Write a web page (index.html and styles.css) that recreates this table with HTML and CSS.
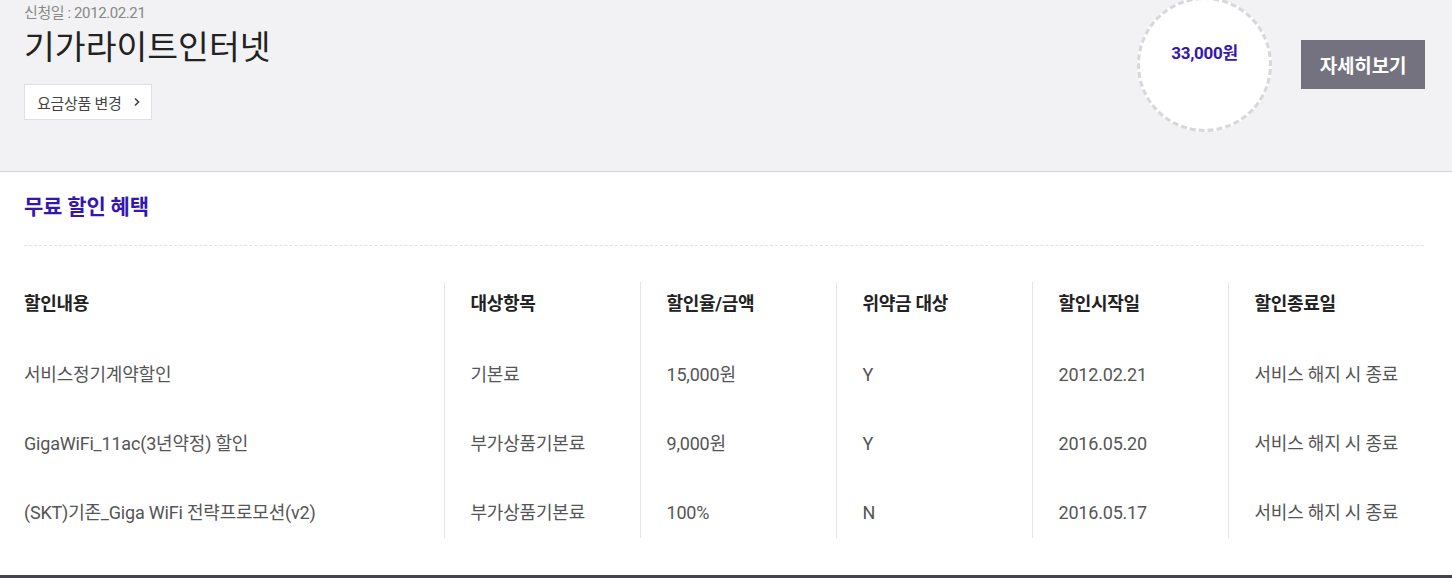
FILE: index.html
```html
<!DOCTYPE html>
<html lang="ko">
<head>
	<meta charset="UTF-8">
	<title>기가라이트인터넷</title>
	<link rel="stylesheet" href="styles.css">
</head>
<body>
	<div class="product-head">
		<div class="product-info">
			<p class="apply-date">신청일 : 2012.02.21</p>
			<h1 class="product-name">기가라이트인터넷</h1>
			<button class="change-btn">요금상품 변경
				<svg width="8" height="10" viewBox="0 0 8 10"><path d="M2 1.5 L5.5 5 L2 8.5" fill="none" stroke="#444" stroke-width="1.6"/></svg>
			</button>
		</div>
		<div class="product-side">
			<div class="price-circle"><span>33,000원</span></div>
			<button class="detail-btn">자세히보기</button>
		</div>
	</div>

	<div class="benefit">
		<h2 class="benefit-title">무료 할인 혜택</h2>
		<table class="benefit-table">
			<colgroup>
				<col class="col-main">
				<col><col><col><col><col>
			</colgroup>
			<thead>
				<tr>
					<th>할인내용</th>
					<th>대상항목</th>
					<th>할인율/금액</th>
					<th>위약금 대상</th>
					<th>할인시작일</th>
					<th>할인종료일</th>
				</tr>
			</thead>
			<tbody>
				<tr>
					<td>서비스정기계약할인</td>
					<td>기본료</td>
					<td>15,000원</td>
					<td>Y</td>
					<td>2012.02.21</td>
					<td>서비스 해지 시 종료</td>
				</tr>
				<tr>
					<td>GigaWiFi_11ac(3년약정) 할인</td>
					<td>부가상품기본료</td>
					<td>9,000원</td>
					<td>Y</td>
					<td>2016.05.20</td>
					<td>서비스 해지 시 종료</td>
				</tr>
				<tr>
					<td>(SKT)기존_Giga WiFi 전략프로모션(v2)</td>
					<td>부가상품기본료</td>
					<td>100%</td>
					<td>N</td>
					<td>2016.05.17</td>
					<td>서비스 해지 시 종료</td>
				</tr>
			</tbody>
		</table>
	</div>
</body>
</html>
```

FILE: styles.css
```css
* {
	box-sizing: border-box;
}
body {
	margin: 0;
	font-family: "Roboto", "Noto Sans CJK KR", sans-serif;
	color: #222;
	background: #fff;
	overflow: hidden;
}
p, h1, h2 {
	margin: 0;
}

/* top product band */
.product-head {
	display: flex;
	justify-content: space-between;
	height: 172px;
	padding: 0 27px 0 24px;
	background: #f2f2f4;
	border-bottom: 1px solid #d2d2d4;
}
.apply-date {
	margin-top: 3px;
	font-size: 15px;
	line-height: 20px;
	color: #888;
	letter-spacing: -0.4px;
}
.product-name {
	margin-top: 2px;
	font-size: 33.5px;
	line-height: 46px;
	font-weight: 400;
	color: #222;
}
.change-btn {
	display: flex;
	align-items: center;
	gap: 12px;
	margin-top: 13px;
	height: 36px;
	width: 128px;
	padding: 0 0 0 12px;
	background: #fff;
	border: 1px solid #e0e0e2;
	font-family: inherit;
	font-size: 15px;
	color: #444;
	letter-spacing: -0.3px;
	cursor: pointer;
}
.product-side {
	display: flex;
	align-items: flex-start;
	gap: 29px;
}
.price-circle {
	width: 135px;
	height: 135px;
	margin-top: -3px;
	border: 3px dashed #d8d8da;
	border-radius: 50%;
	background: #fff;
	text-align: center;
	padding-top: 41px;
}
.price-circle span {
	font-size: 17px;
	line-height: 24px;
	font-weight: 700;
	color: #3416b2;
	letter-spacing: -0.3px;
}
.detail-btn {
	margin-top: 40px;
	width: 124px;
	height: 49px;
	border: 0;
	background: #74727f;
	color: #fff;
	font-family: inherit;
	font-size: 19px;
	font-weight: 700;
	letter-spacing: -0.2px;
	cursor: pointer;
}

/* benefit section */
.benefit {
	padding: 20px 28px 0 24px;
	height: 406px;
	border-bottom: 3px solid #434152;
}
.benefit-title {
	font-size: 21px;
	line-height: 30px;
	font-weight: 700;
	color: #3416b2;
	letter-spacing: -0.2px;
	padding-bottom: 23px;
	border-bottom: 1px dashed #e2e2e4;
}
.benefit-table {
	width: 1400px;
	margin-top: 36px;
	border-collapse: collapse;
	table-layout: fixed;
}
.benefit-table col {
	width: 196px;
}
.benefit-table .col-main {
	width: 420px;
}
.benefit-table th,
.benefit-table td {
	text-align: left;
	padding: 0 0 0 26px;
	font-size: 18px;
	border-left: 1px solid #e6e6e8;
	white-space: nowrap;
}
.benefit-table th:first-child,
.benefit-table td:first-child {
	border-left: 0;
	padding-left: 0;
}
.benefit-table th {
	font-weight: 700;
	color: #222;
	line-height: 44px;
	padding-bottom: 14px;
	letter-spacing: -0.3px;
}
.benefit-table td {
	color: #555;
	line-height: 21px;
	padding-top: 24px;
	padding-bottom: 24px;
	letter-spacing: -0.2px;
}
.benefit-table tr:last-child td {
	padding-bottom: 15px;
}
```
